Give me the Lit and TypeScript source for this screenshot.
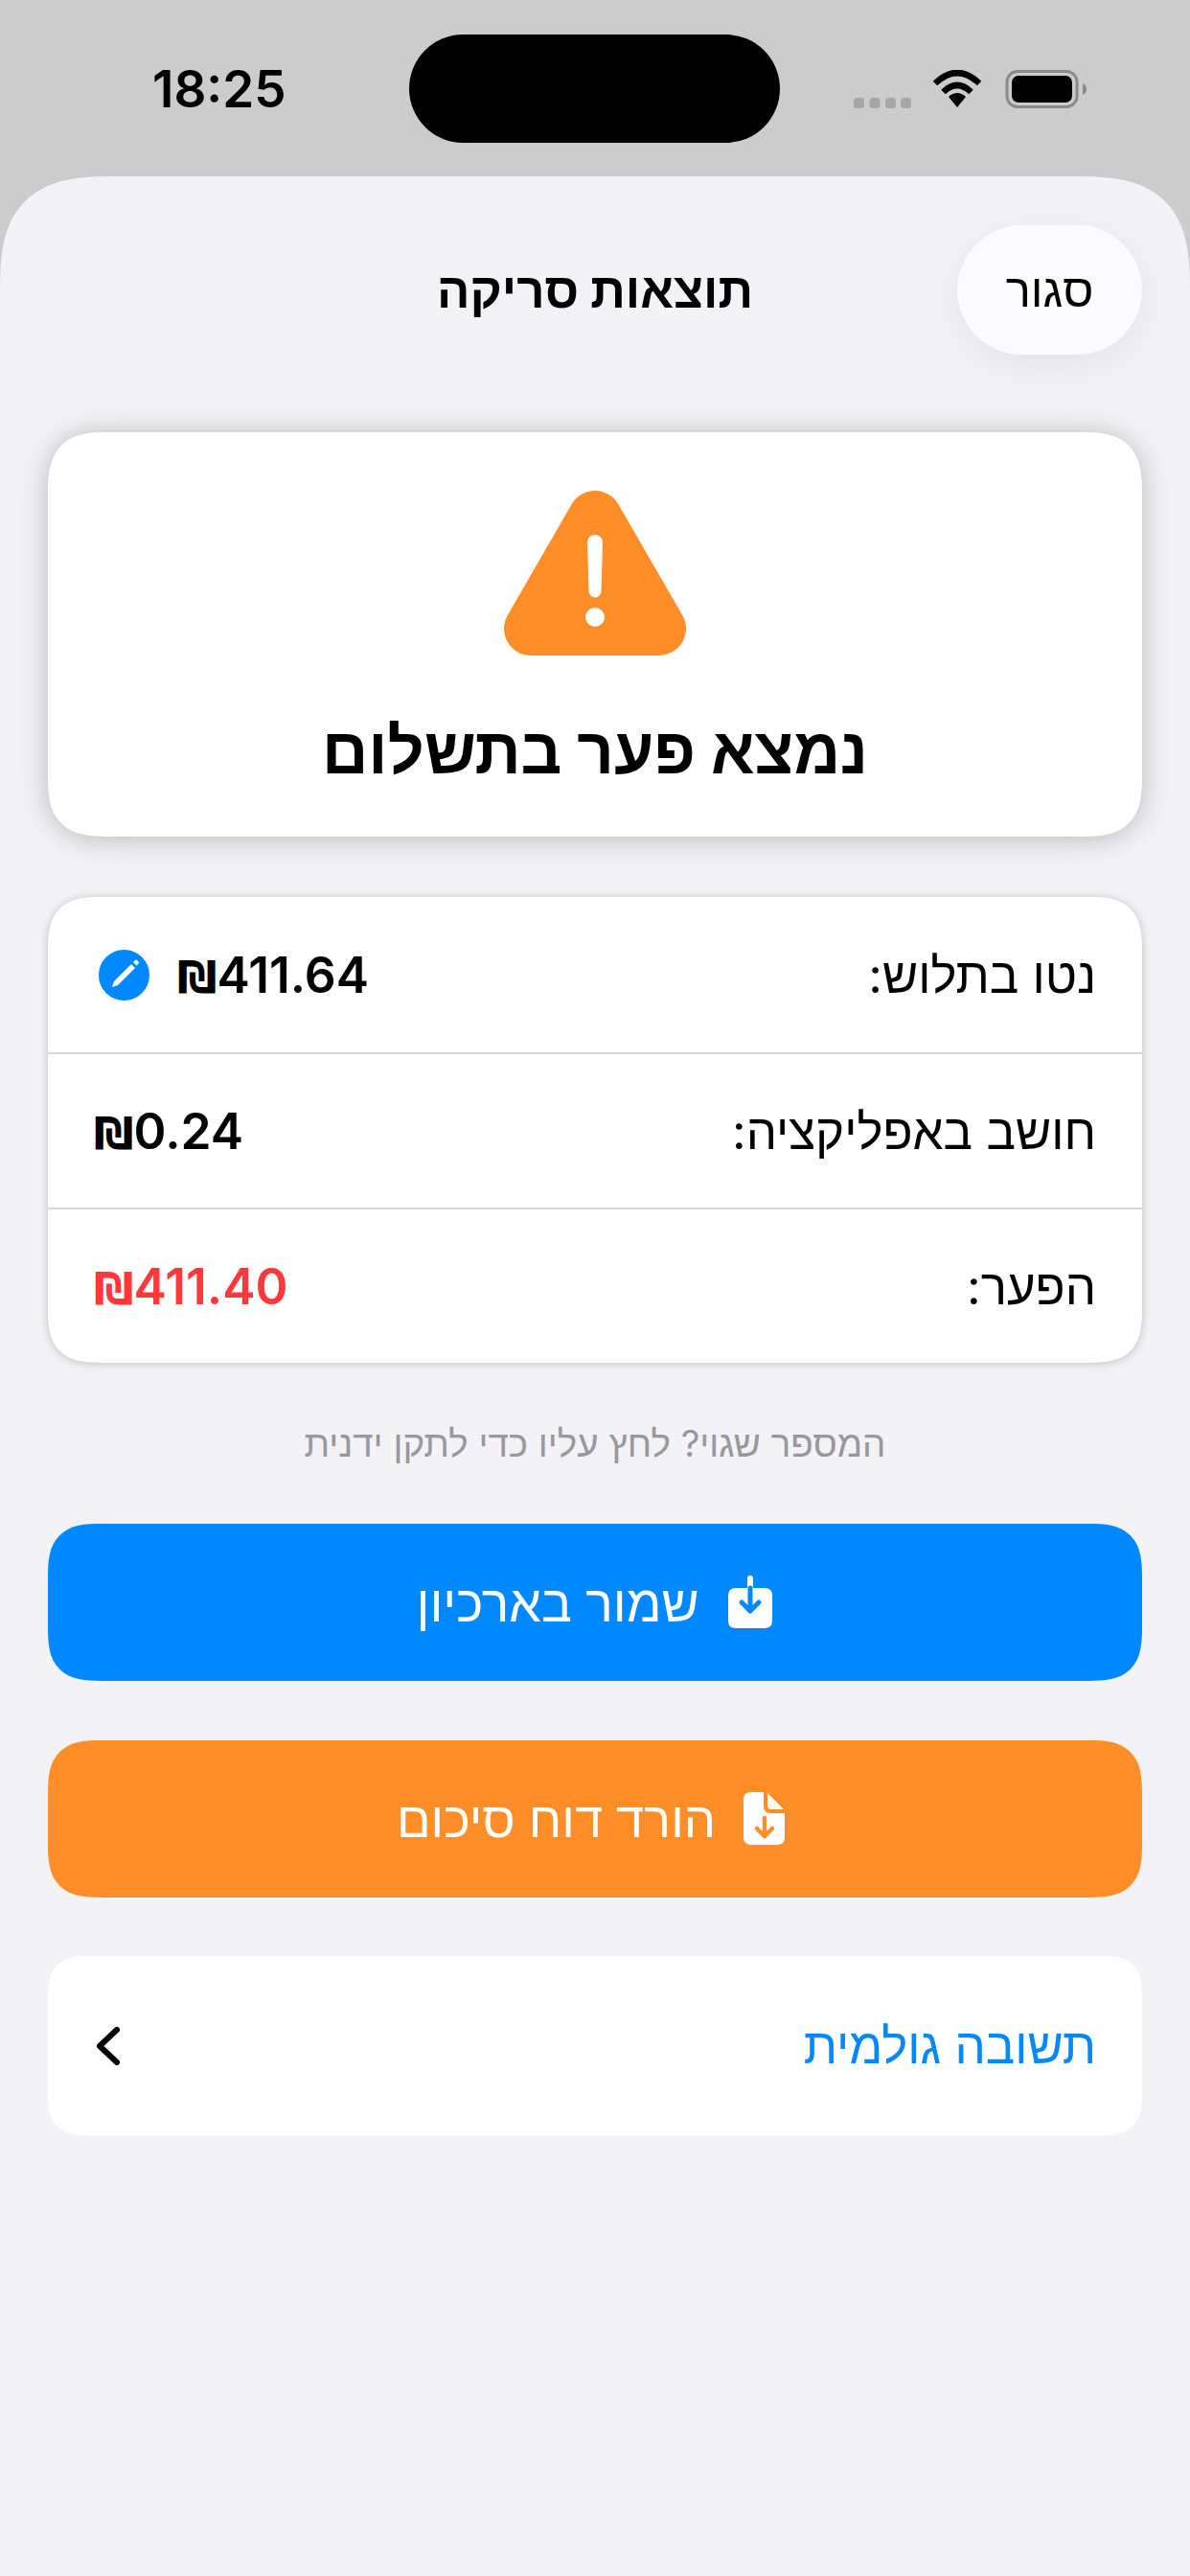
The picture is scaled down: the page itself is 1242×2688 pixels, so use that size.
import {LitElement, html, css} from 'lit';
import {customElement} from 'lit/decorators.js';

@customElement('app-root')
export class AppRoot extends LitElement {
    static styles = css`
        :host {
            display: block;
            width: 1242px;
            height: 2688px;
            background: #cccccc;
            font-family: "Inter", "Liberation Sans", sans-serif;
            overflow: hidden;
        }

        .status {
            height: 184px;
            box-sizing: border-box;
            padding-top: 36px;
            display: grid;
            grid-template-columns: 427px 387px 1fr;
            align-items: start;
        }

        .time {
            font-size: 53px;
            font-weight: 600;
            line-height: 114px;
            padding-left: 159px;
            color: #000;
        }

        .island {
            height: 113px;
            border-radius: 57px;
            background: #000;
        }

        .indicators {
            display: flex;
            align-items: flex-start;
            padding-left: 77px;
            padding-top: 37px;
        }

        .indicators svg {
            display: block;
        }

        .sheet {
            height: 2504px;
            box-sizing: border-box;
            background: #f2f2f7;
            border-radius: 120px 120px 0 0;
            corner-shape: superellipse(1.5);
            padding: 51px 50px 0;
            direction: rtl;
        }

        .header {
            display: grid;
            grid-template-columns: 193px 1fr 193px;
            align-items: center;
            height: 135px;
        }

        .close {
            height: 135px;
            border-radius: 68px;
            background: #fbfbfe;
            box-shadow: 0 10px 50px rgba(0, 0, 0, 0.07);
            display: flex;
            align-items: center;
            justify-content: center;
            font-size: 49px;
            color: #000;
        }

        .title {
            text-align: center;
            font-size: 51px;
            font-weight: 700;
            color: #000;
        }

        .alert {
            margin-top: 81px;
            height: 422px;
            box-sizing: border-box;
            padding-top: 61px;
            background: #fff;
            border-radius: 64px;
            corner-shape: superellipse(1.5);
            box-shadow: 0 2px 30px rgba(0, 0, 0, 0.24);
            display: flex;
            flex-direction: column;
            align-items: center;
        }

        .alert svg {
            display: block;
        }

        .alert h1 {
            margin: 59px 0 0;
            font-size: 67px;
            line-height: 80px;
            font-weight: 700;
            color: #000;
        }

        .rows {
            margin-top: 63px;
            background: #fff;
            border-radius: 56px;
            corner-shape: superellipse(1.5);
            box-shadow: 0 1px 10px rgba(0, 0, 0, 0.22);
            overflow: hidden;
        }

        .row {
            height: 162px;
            box-sizing: border-box;
            padding: 0 48px 0 50px;
            display: flex;
            align-items: center;
            justify-content: space-between;
            font-size: 51px;
            color: #000;
        }

        .row + .row {
            border-top: 2px solid #d8d8dc;
        }

        .amount {
            display: flex;
            align-items: center;
            gap: 31px;
            direction: ltr;
            font-size: 51.5px;
            font-weight: 600;
        }

        .amount svg {
            display: block;
            margin-left: 3px;
        }

        .amount.red {
            color: #ff383c;
        }

        .shekel {
            font-family: "DejaVu Sans", sans-serif;
            font-weight: 700;
            font-size: 46px;
            margin-left: -2px;
        }

        .note {
            margin-top: 61px;
            text-align: center;
            font-size: 38.5px;
            line-height: 46px;
            color: #98989d;
        }

        .action {
            height: 164px;
            border-radius: 56px;
            corner-shape: superellipse(1.5);
            display: flex;
            align-items: center;
            justify-content: center;
            gap: 30px;
            color: #fff;
            font-size: 53.5px;
            font-weight: 500;
        }

        .action svg {
            display: block;
        }

        .blue {
            margin-top: 61px;
            background: #0088ff;
        }

        .orange {
            background: #ff8d28;
            margin-top: 62px;
            font-size: 52.5px;
            gap: 28px;
            padding-right: 9px;
        }

        .raw {
            margin-top: 61px;
            height: 187px;
            box-sizing: border-box;
            padding: 0 48px 0 50px;
            background: #fff;
            border-radius: 44px;
            corner-shape: superellipse(1.5);
            display: flex;
            align-items: center;
            justify-content: space-between;
            font-size: 51px;
            color: #0088ff;
        }

        .raw svg {
            display: block;
        }
    `;

    render() {
        return html`
            <div class="status">
                <div class="time">18:25</div>
                <div class="island"></div>
                <div class="indicators">
                    <svg width="245" height="42" viewBox="0 0 245 42">
                        <g fill="#a6a6a6">
                            <rect x="0" y="29" width="11" height="11" rx="3.5"/>
                            <rect x="16.5" y="29" width="11" height="11" rx="3.5"/>
                            <rect x="33" y="29" width="11" height="11" rx="3.5"/>
                            <rect x="49" y="29" width="11" height="11" rx="3.5"/>
                        </g>
                        <g fill="none" stroke="#000" stroke-width="6.5">
                            <path d="M85 14 Q108 -8 131 14"/>
                            <path d="M93.500 23 Q108 9 122.500 23"/>
                        </g>
                        <path d="M99 28 Q108 20 117 28 L108 39 Z" fill="#000"/>
                        <rect x="160" y="1.500" width="73" height="37" rx="11" fill="none" stroke="#8a8a8a" stroke-width="3"/>
                        <rect x="165" y="6" width="63" height="28" rx="7" fill="#000"/>
                        <path d="M239 14 Q243 16 243 20 Q243 24 239 26 Z" fill="#8a8a8a"/>
                    </svg>
                </div>
            </div>
            <div class="sheet">
                <div class="header">
                    <div class="close">סגור</div>
                    <div class="title">תוצאות סריקה</div>
                    <div></div>
                </div>
                <div class="alert">
                    <svg width="190" height="172" viewBox="0 0 190 172">
                        <path d="M28 144 L162 144 L95 28 Z" fill="#ff8d28" stroke="#ff8d28" stroke-width="56" stroke-linejoin="round"/>
                        <path d="M87 54 a8 8 0 0 1 16 0 L101.500 105 a6.500 6.500 0 0 1 -13 0 Z" fill="#fff"/>
                        <circle cx="95" cy="132" r="10" fill="#fff"/>
                    </svg>
                    <h1>נמצא פער בתשלום</h1>
                </div>
                <div class="rows">
                    <div class="row">
                        <span>נטו בתלוש:</span>
                        <span class="amount">
                            <svg width="53" height="53" viewBox="0 0 53 53">
                                <circle cx="26.500" cy="26.500" r="26.500" fill="#0088ff"/>
                                <path d="M14 39 L16 33 L34 15 L38 19 L20 37 Z" fill="#fff"/>
                                <path d="M36 13 L38 11 Q39 10 40 11 L41.500 12.500 Q42.500 13.500 41.500 14.500 L39.500 16.500 Z" fill="#fff"/>
                            </svg>
                            <span><span class="shekel">₪</span>411.64</span>
                        </span>
                    </div>
                    <div class="row">
                        <span>חושב באפליקציה:</span>
                        <span class="amount"><span><span class="shekel">₪</span>0.24</span></span>
                    </div>
                    <div class="row">
                        <span>הפער:</span>
                        <span class="amount red"><span><span class="shekel">₪</span>411.40</span></span>
                    </div>
                </div>
                <div class="note">המספר שגוי? לחץ עליו כדי לתקן ידנית</div>
                <div class="action blue">
                    <svg width="48" height="56" viewBox="0 0 48 56">
                        <path d="M9 13 H39 Q47 13 47 21 V47 Q47 55 39 55 H9 Q1 55 1 47 V21 Q1 13 9 13 Z" fill="#fff"/>
                        <path d="M24 3 V13" stroke="#fff" stroke-width="6" stroke-linecap="round" fill="none"/>
                        <path d="M24 13 V35 M15 28 L24 37 L33 28" stroke="#0088ff" stroke-width="5" stroke-linecap="round" stroke-linejoin="round" fill="none"/>
                    </svg>
                    <span>שמור בארכיון</span>
                </div>
                <div class="action orange">
                    <svg width="44" height="56" viewBox="0 0 44 56">
                        <path d="M9 0 H22 V15 Q22 22 29 22 H44 V47 Q44 55 36 55 H9 Q1 55 1 47 V8 Q1 0 9 0 Z" fill="#fff"/>
                        <path d="M26 1 L43 18 H30 Q26 18 26 14 Z" fill="#fff"/>
                        <path d="M23 27 V46 M15 38 L23 46 L31 38" stroke="#ff8d28" stroke-width="4.500" stroke-linecap="round" stroke-linejoin="round" fill="none"/>
                    </svg>
                    <span>הורד דוח סיכום</span>
                </div>
                <div class="raw">
                    <span>תשובה גולמית</span>
                    <svg width="26" height="40" viewBox="0 0 26 40">
                        <path d="M22 3 L4 20 L22 37" stroke="#000" stroke-width="6" stroke-linecap="round" stroke-linejoin="round" fill="none"/>
                    </svg>
                </div>
            </div>
        `;
    }
}
